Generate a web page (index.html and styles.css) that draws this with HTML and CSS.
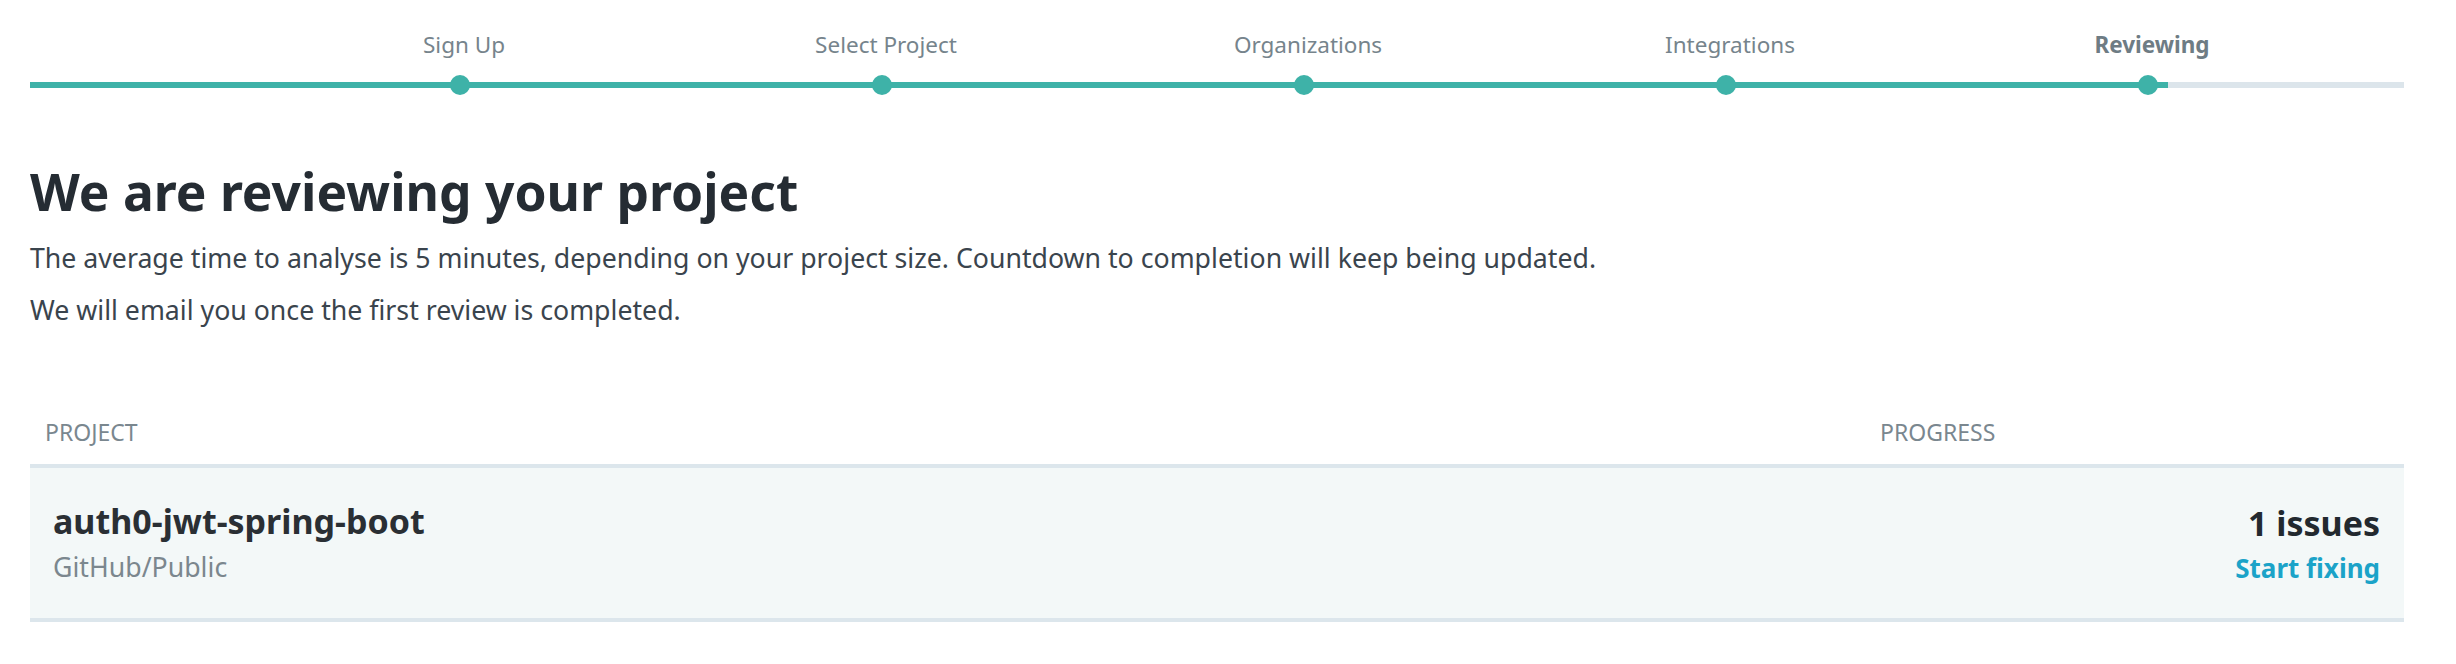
FILE: index.html
```html
<!DOCTYPE html>
<html lang="en">
<head>
<meta charset="utf-8">
<title>Reviewing</title>
<link rel="stylesheet" href="styles.css">
</head>
<body>
<main class="page">
  <div class="stepper">
    <span class="step-label s1">Sign Up</span>
    <span class="step-label s2">Select Project</span>
    <span class="step-label s3">Organizations</span>
    <span class="step-label s4">Integrations</span>
    <span class="step-label s5 active">Reviewing</span>
    <div class="track"><div class="fill" style="width:2138px"></div></div>
    <span class="dot s1"></span>
    <span class="dot s2"></span>
    <span class="dot s3"></span>
    <span class="dot s4"></span>
    <span class="dot s5"></span>
  </div>

  <h1 class="title">We are reviewing your project</h1>
  <p class="text">The average time to analyse is 5 minutes, depending on your project size. Countdown to completion will keep being updated.</p>
  <p class="text">We will email you once the first review is completed.</p>

  <div class="table">
    <div class="th th-project">PROJECT</div>
    <div class="th th-progress">PROGRESS</div>
    <div class="row">
      <div class="cell cell-project">
        <div class="name">auth0-jwt-spring-boot</div>
        <div class="source">GitHub/Public</div>
      </div>
      <div class="cell cell-progress">
        <div class="issues">1 issues</div>
        <a class="fix" href="#">Start fixing</a>
      </div>
    </div>
  </div>
</main>
</body>
</html>
```
FILE: styles.css
```css
* { box-sizing: border-box; }
body {
  margin: 0;
  background: #ffffff;
  font-family: "Noto Sans", "Open Sans", sans-serif;
  color: #39434c;
}
.page {
  padding: 30px 52px 0 30px;
}

/* stepper */
.stepper {
  display: grid;
  grid-template-columns: 219px repeat(5, 422px) 1fr;
  grid-template-rows: 30px 20px;
  row-gap: 15px;
}
.step-label {
  grid-row: 1;
  justify-self: center;
  font-size: 22.5px;
  line-height: 30px;
  color: #76848c;
  white-space: nowrap;
  padding-left: 8px;
}
.step-label.active { font-weight: 700; color: #6e7c84; }
.s1 { grid-column: 2; }
.s2 { grid-column: 3; }
.s3 { grid-column: 4; }
.s4 { grid-column: 5; }
.s5 { grid-column: 6; }
.track {
  grid-row: 2;
  grid-column: 1 / -1;
  align-self: center;
  height: 6px;
  background: #dce5eb;
  display: flex;
}
.fill { height: 100%; background: #3eb2a8; }
.dot {
  grid-row: 2;
  justify-self: center;
  width: 20px;
  height: 20px;
  border-radius: 50%;
  background: #3eb2a8;
  z-index: 1;
}

/* heading */
.title {
  margin: 65px 0 0;
  font-size: 51.5px;
  line-height: 62px;
  font-weight: 700;
  color: #252c33;
}
.text {
  margin: 0;
  font-size: 26.7px;
  line-height: 52px;
  color: #3a444d;
}
.text:first-of-type { margin-top: 10px; }

/* table */
.table {
  margin-top: 72px;
  display: grid;
  grid-template-columns: 1fr 540px;
}
.th {
  font-size: 23px;
  line-height: 32px;
  color: #7a878f;
  padding: 8px 15px 16px;
  text-transform: uppercase;
}
.th-progress { padding-left: 16px; }
.row {
  grid-column: 1 / -1;
  display: grid;
  grid-template-columns: 1fr 540px;
  background: #f3f8f8;
  border-top: 4px solid #dce6ec;
  border-bottom: 4px solid #dce6ec;
}
.cell {
  padding: 33px 24px 33px 23px;
  display: flex;
  flex-direction: column;
  gap: 8px;
}
.cell-progress { align-items: flex-end; padding-top: 35px; padding-bottom: 31px; gap: 7px; }
.name {
  font-size: 34px;
  line-height: 40px;
  font-weight: 700;
  color: #2a2f34;
}
.source {
  font-size: 26.7px;
  line-height: 36px;
  color: #7b878e;
}
.issues {
  font-size: 34px;
  line-height: 40px;
  font-weight: 700;
  color: #22292f;
}
.fix {
  font-size: 26px;
  line-height: 36px;
  font-weight: 700;
  color: #1ba3c8;
  text-decoration: none;
}
```
